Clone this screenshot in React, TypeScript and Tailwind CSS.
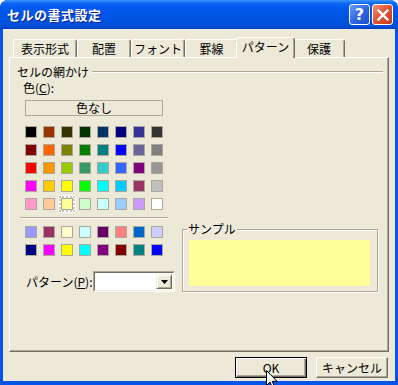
import clsx from 'clsx';

const paletteColors = [
  '#000000', '#993300', '#333300', '#003300', '#003366', '#000080', '#333399', '#333333',
  '#800000', '#FF6600', '#808000', '#008000', '#008080', '#0000FF', '#666699', '#808080',
  '#FF0000', '#FF9900', '#99CC00', '#339966', '#33CCCC', '#3366FF', '#800080', '#969696',
  '#FF00FF', '#FFCC00', '#FFFF00', '#00FF00', '#00FFFF', '#00CCFF', '#993366', '#C0C0C0',
  '#FF99CC', '#FFCC99', '#FFFF99', '#CCFFCC', '#CCFFFF', '#99CCFF', '#CC99FF', '#FFFFFF',
];

const chartColors = [
  '#9999FF', '#993366', '#FFFFCC', '#CCFFFF', '#660066', '#FF8080', '#0066CC', '#CCCCFF',
  '#000080', '#FF00FF', '#FFFF00', '#00FFFF', '#800080', '#800000', '#008080', '#0000FF',
];

const selectedIndex = 34;

const tabs = [
  { label: '表示形式', width: 'w-[64px]' },
  { label: '配置', width: 'w-[54px]' },
  { label: 'フォント', width: 'w-[54px]' },
  { label: '罫線', width: 'w-[53px]' },
  { label: 'パターン', width: 'w-[59px]', active: true },
  { label: '保護', width: 'w-[52px]' },
];

function Swatch({ color, selected }: { color: string; selected?: boolean }) {
  return (
    <div
      className={clsx(
        'w-[12px] h-[12px] border border-[#aca899]',
        selected && 'shadow-[0_0_0_3px_#ffffff] outline-2 outline-dotted outline-[#c8c6ba]'
      )}
      style={{ backgroundColor: color }}
    />
  );
}

function TitleButtons() {
  return (
    <div className="flex gap-[2px] pr-[5px]">
      <div className="w-[21px] h-[21px] rounded-[3px] border border-white bg-[linear-gradient(135deg,#6d9cf7_0%,#2c63e0_55%,#1a4fd0_100%)] flex items-center justify-center text-white font-bold text-[16px] leading-none [font-family:'DejaVu_Sans',sans-serif]">
        ?
      </div>
      <div className="w-[21px] h-[21px] rounded-[3px] border border-white bg-[linear-gradient(135deg,#f19477_0%,#e2512c_50%,#c43a17_100%)] flex items-center justify-center">
        <svg width="12" height="12" viewBox="0 0 12 12">
          <path d="M1.5 1.5 L10.5 10.5 M10.5 1.5 L1.5 10.5" stroke="#fff" strokeWidth="2.4" strokeLinecap="square" />
        </svg>
      </div>
    </div>
  );
}

function RaisedButton({ label, isDefault }: { label: string; isDefault?: boolean }) {
  return (
    <div
      className={clsx(
        'w-[72px] h-[21px] flex items-center justify-center',
        isDefault
          ? 'border border-black shadow-[inset_1px_1px_0_#ffffff,inset_-1px_-1px_0_#716f64,inset_-2px_-2px_0_#aca899]'
          : 'border-t border-l border-white border-r border-b border-r-[#716f64] border-b-[#716f64] shadow-[inset_-1px_-1px_0_#aca899]'
      )}
    >
      {label}
    </div>
  );
}

export default function App() {
  return (
    <div className="relative w-[398px] h-[385px] overflow-hidden flex flex-col rounded-t-[8px] bg-[#0754e6] px-[3px] pb-[4px] text-[12px] leading-[14px] text-black [font-family:'Noto_Sans_CJK_JP',sans-serif]">
      {/* title bar */}
      <div className="-mx-[3px] h-[29px] shrink-0 flex items-center justify-between pl-[7px] bg-[linear-gradient(180deg,#3d95ff_0%,#0a66f5_12%,#0058ee_30%,#0054e3_60%,#0050da_88%,#003fc4_100%)]">
        <span className="text-white font-bold text-[13px] tracking-[0.5px] [text-shadow:1px_1px_0_#0f1f8c]">
          セルの書式設定
        </span>
        <TitleButtons />
      </div>

      {/* body */}
      <div className="flex-1 bg-[#ece9d8] flex flex-col">
        <div className="flex items-end h-[21px] mt-[8px] pl-[10px]">
          {tabs.map((tab) => (
            <div
              key={tab.label}
              className={clsx(
                tab.width,
                'flex items-center justify-center rounded-t-[3px] border-t border-l border-white border-r border-r-[#716f64] shadow-[inset_-1px_0_0_#aca899]',
                tab.active ? 'h-[21px] -mx-[2px] relative z-10 bg-[#ece9d8] pb-[2px]' : 'h-[19px] pb-[1px]'
              )}
            >
              {tab.label}
            </div>
          ))}
        </div>

        <div className="mx-[6px] -mt-px h-[295px] border-l border-t border-white border-r border-b border-r-[#716f64] border-b-[#716f64] shadow-[inset_-1px_-1px_0_#aca899] flex flex-col pt-[7px] pl-[7px] pr-[5px]">
          <div className="flex items-center h-[14px]">
            <span>セルの網かけ</span>
            <div className="flex-1 ml-[3px] h-[2px] border-t border-[#aca899] border-b border-b-white" />
          </div>

          <div className="ml-[6px] mt-[2px] h-[14px]">
            色(<span className="underline">C</span>):
          </div>

          <div className="ml-[8px] mt-[5px] w-[138px] h-[16px] border border-[#aca899] flex items-center justify-center">
            色なし
          </div>

          <div className="ml-[8px] mt-[10px] grid grid-cols-[repeat(8,12px)] gap-[6px]">
            {paletteColors.map((c, i) => (
              <Swatch key={i} color={c} selected={i === selectedIndex} />
            ))}
          </div>

          <div className="ml-[3px] mt-[7px] w-[148px] h-[2px] border-t border-[#aca899] border-b border-b-white" />

          <div className="flex items-start">
            <div className="w-[158px] flex flex-col">
              <div className="ml-[8px] mt-[7px] grid grid-cols-[repeat(8,12px)] gap-[6px]">
                {chartColors.map((c, i) => (
                  <Swatch key={i} color={c} />
                ))}
              </div>
              <div className="mt-[15px] h-[21px] flex items-center justify-between">
                <span className="ml-[9px]">
                  パターン(<span className="underline">P</span>):
                </span>
                <div className="w-[82px] h-[21px] flex border-t border-l border-[#aca899] border-r border-b border-r-white border-b-white">
                  <div className="flex-1 flex border-t border-l border-[#716f64] border-r border-b border-r-[#f1efe2] border-b-[#f1efe2] bg-white p-[1px] justify-end">
                    <div className="w-[16px] h-full bg-[#ece9d8] border-t border-l border-[#f1efe2] border-r border-b border-r-[#716f64] border-b-[#716f64] shadow-[inset_1px_1px_0_#ffffff,inset_-1px_-1px_0_#aca899] flex items-center justify-center">
                      <svg width="7" height="4" viewBox="0 0 7 4">
                        <path d="M0 0 H7 L3.5 4 Z" fill="#000" />
                      </svg>
                    </div>
                  </div>
                </div>
              </div>
            </div>

            <fieldset className="ml-[7px] mt-[3px] w-[196px] border border-[#aca899] shadow-[1px_1px_0_#ffffff,inset_1px_1px_0_#ffffff]">
              <legend className="ml-[4px] px-[1px] h-[14px]">サンプル</legend>
              <div className="ml-[6px] mt-[4px] mb-[5px] w-[181px] h-[46px] bg-[#ffff99]" />
            </fieldset>
          </div>
        </div>

        <div className="mt-[5px] flex justify-end gap-[9px] pr-[7px]">
          <RaisedButton label="OK" isDefault />
          <RaisedButton label="キャンセル" />
        </div>
      </div>

      {/* mouse pointer over the OK button */}
      <svg className="absolute left-[266px] top-[370px]" width="12" height="19" viewBox="0 0 12 19">
        <path d="M0.5 0.5 L0.5 15.5 L4 12 L6.5 17.8 L8.6 16.9 L6.2 11.3 L11 11.3 Z" fill="#fff" stroke="#000" strokeWidth="1" strokeLinejoin="miter" />
      </svg>
    </div>
  );
}
